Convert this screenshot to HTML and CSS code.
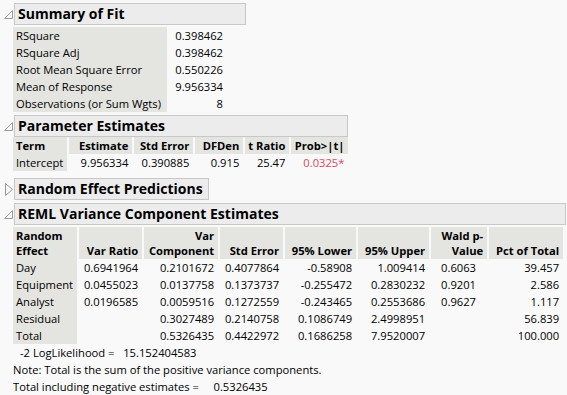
FILE: index.html
```html
<!DOCTYPE html>
<html>
<head>
<meta charset="utf-8">
<link rel="stylesheet" href="styles.css">
</head>
<body>
<div class="report">
  <section class="outline">
    <div class="ohead">
      <svg class="tri" width="9" height="9" viewBox="0 0 9 9"><polygon points="0.5,8.5 8.5,0.5 8.5,8.5" fill="none" stroke="#9a9a9a"/></svg>
      <div class="title w-fit">Summary of Fit</div>
    </div>
    <table class="grid fit">
      <colgroup><col class="c-fit1"><col class="c-fit2"></colgroup>
      <tr><td class="lab">RSquare</td><td class="num">0.398462</td></tr>
      <tr><td class="lab">RSquare Adj</td><td class="num">0.398462</td></tr>
      <tr><td class="lab">Root Mean Square Error</td><td class="num">0.550226</td></tr>
      <tr><td class="lab">Mean of Response</td><td class="num">9.956334</td></tr>
      <tr><td class="lab">Observations (or Sum Wgts)</td><td class="num">8</td></tr>
    </table>
  </section>

  <section class="outline">
    <div class="ohead">
      <svg class="tri" width="9" height="9" viewBox="0 0 9 9"><polygon points="0.5,8.5 8.5,0.5 8.5,8.5" fill="none" stroke="#9a9a9a"/></svg>
      <div class="title w-param">Parameter Estimates</div>
    </div>
    <table class="grid param">
      <colgroup><col class="p1"><col class="p2"><col class="p3"><col class="p4"><col class="p5"><col class="p6"></colgroup>
      <tr class="hdr"><th class="left">Term</th><th>Estimate</th><th>Std Error</th><th>DFDen</th><th>t Ratio</th><th>Prob&gt;|t|</th></tr>
      <tr><td class="lab">Intercept</td><td class="num">9.956334</td><td class="num">0.390885</td><td class="num">0.915</td><td class="num">25.47</td><td class="num sig">0.0325*</td></tr>
    </table>
  </section>

  <section class="outline">
    <div class="ohead">
      <svg class="tri closed" width="8" height="13" viewBox="0 0 8 13"><polygon points="0.5,0.5 7.5,6.5 0.5,12.5" fill="none" stroke="#9a9a9a"/></svg>
      <div class="title w-rand">Random Effect Predictions</div>
    </div>
  </section>

  <section class="outline">
    <div class="ohead">
      <svg class="tri" width="9" height="9" viewBox="0 0 9 9"><polygon points="0.5,8.5 8.5,0.5 8.5,8.5" fill="none" stroke="#9a9a9a"/></svg>
      <div class="title w-reml">REML Variance Component Estimates</div>
    </div>
    <table class="grid reml">
      <colgroup><col class="r1"><col class="r2"><col class="r3"><col class="r4"><col class="r5"><col class="r6"><col class="r7"><col class="r8"></colgroup>
      <tr class="hdr two"><th class="left"><div>Random</div><div>Effect</div></th><th>Var Ratio</th><th><div>Var</div><div>Component</div></th><th>Std Error</th><th>95% Lower</th><th>95% Upper</th><th><div>Wald p-</div><div>Value</div></th><th>Pct of Total</th></tr>
      <tr><td class="lab">Day</td><td class="num">0.6941964</td><td class="num">0.2101672</td><td class="num">0.4077864</td><td class="num">-0.58908</td><td class="num">1.009414</td><td class="pv">0.6063</td><td class="num">39.457</td></tr>
      <tr><td class="lab">Equipment</td><td class="num">0.0455023</td><td class="num">0.0137758</td><td class="num">0.1373737</td><td class="num">-0.255472</td><td class="num">0.2830232</td><td class="pv">0.9201</td><td class="num">2.586</td></tr>
      <tr><td class="lab">Analyst</td><td class="num">0.0196585</td><td class="num">0.0059516</td><td class="num">0.1272559</td><td class="num">-0.243465</td><td class="num">0.2553686</td><td class="pv">0.9627</td><td class="num">1.117</td></tr>
      <tr><td class="lab">Residual</td><td class="num"></td><td class="num">0.3027489</td><td class="num">0.2140758</td><td class="num">0.1086749</td><td class="num">2.4998951</td><td class="pv"></td><td class="num">56.839</td></tr>
      <tr><td class="lab">Total</td><td class="num"></td><td class="num">0.5326435</td><td class="num">0.4422972</td><td class="num">0.1686258</td><td class="num">7.9520007</td><td class="pv"></td><td class="num">100.000</td></tr>
    </table>
    <div class="notes">
      <div class="note indent">-2 LogLikelihood =&nbsp;&nbsp; 15.152404583</div>
      <div class="note">Note: Total is the sum of the positive variance components.</div>
      <div class="note">Total including negative estimates = &nbsp;&nbsp;&nbsp;&nbsp;0.5326435</div>
    </div>
  </section>
</div>
</body>
</html>
```

FILE: styles.css
```css
html, body {
  margin: 0;
  padding: 0;
  background: #f9f9f9;
}
body {
  font-family: "Open Sans", "Noto Sans", sans-serif;
  font-size: 11.2px;
  color: #000;
  width: 567px;
  height: 395px;
  overflow: hidden;
}
.report {
  padding: 3px 0 0 0;
  display: flex;
  flex-direction: column;
  gap: 3px;
}
.outline {
  display: flex;
  flex-direction: column;
  align-items: flex-start;
}
.ohead {
  display: flex;
  align-items: center;
  height: 22px;
}
.tri {
  width: 9px;
  margin-left: 4px;
  margin-right: 1px;
  flex: none;
}
.tri.closed {
  width: 8px;
  margin-left: 5px;
  margin-right: 1px;
}
.title {
  box-sizing: border-box;
  height: 22px;
  line-height: 20px;
  border: 1px solid #c8c8c8;
  background: #ececec;
  font-weight: 700;
  font-size: 14px;
  padding-left: 3px;
  white-space: nowrap;
}
.w-fit { width: 232px; }
.w-param { width: 334px; }
.w-rand { width: 195px; }
.w-reml { width: 552px; }

.grid {
  border-collapse: separate;
  border-spacing: 0;
  margin-left: 13px;
  table-layout: fixed;
}
.grid td, .grid th {
  padding: 0 4px 0 3px;
  height: 17px;
  line-height: 17px;
  white-space: nowrap;
  overflow: visible;
}
.grid th {
  background: #e4e4e0;
  font-weight: 700;
  text-align: right;
  border-left: 2px solid #f9f9f9;
  vertical-align: bottom;
}
.grid th:first-child { border-left: 0; }
.grid th.left { text-align: left; }
.grid .hdr th { padding-bottom: 0; }
.grid .hdr.two th { height: 31px; line-height: 15px; padding-bottom: 1px; }
.lab {
  background: #e4e4e0;
  text-align: left;
}
.num { text-align: right; }
.sig { color: #e8455e; }
.grid td.pv { text-align: left; padding-left: 12px; }

.fit { margin-top: 2px; }
.c-fit1 { width: 154px; }
.c-fit2 { width: 60px; }

.param { margin-bottom: 4px; }
.p1 { width: 54px; }
.p2 { width: 65px; }
.p3 { width: 61px; }
.p4 { width: 50px; }
.p5 { width: 45px; }
.p6 { width: 59px; }

.reml { margin-top: 2px; }
.r1 { width: 64px; }
.r2 { width: 65px; }
.r3 { width: 76px; }
.r4 { width: 65px; }
.r5 { width: 73px; }
.r6 { width: 73px; }
.r7 { width: 58px; }
.r8 { width: 76px; }

.notes {
  margin-top: 0;
  display: flex;
  flex-direction: column;
}
.note {
  height: 17px;
  line-height: 17px;
  padding-left: 13px;
  white-space: pre;
}
.note.indent { padding-left: 20px; }
```
